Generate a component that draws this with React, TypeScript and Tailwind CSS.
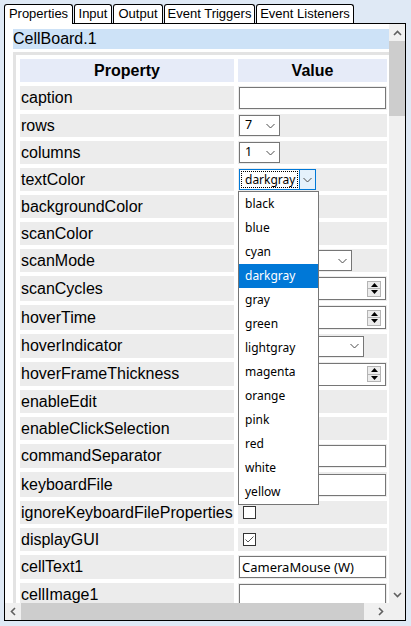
import React from 'react';

const ui = "font-['Noto_Sans','Open_Sans',sans-serif]";

function Chevron() {
  return (
    <svg width="9" height="6" viewBox="0 0 9 6">
      <polyline points="0.5,1 4.5,5 8.5,1" fill="none" stroke="#4d4d4d" strokeWidth="1" />
    </svg>
  );
}

function Select({ text, w }: { text: string; w: string }) {
  return (
    <div className={`${w} h-[21px] border border-[#767676] bg-white flex items-center justify-between pl-[5px] pr-[4px] text-[12.5px] leading-none ${ui}`}>
      <span>{text}</span>
      <Chevron />
    </div>
  );
}

function FocusSelect({ text }: { text: string }) {
  return (
    <div className={`w-[77px] h-[21px] border border-[#0078d7] bg-white flex text-[12px] leading-none ${ui}`}>
      <div className="flex-1 m-px border border-dotted border-black flex items-center pl-[3px]">{text}</div>
      <div className="w-[16px] border-l border-[#0078d7] bg-[#e5f1fb] flex items-center justify-center">
        <Chevron />
      </div>
    </div>
  );
}

function TextInput({ text = '' }: { text?: string }) {
  return (
    <div className={`w-[147px] h-[22px] border border-[#767676] bg-white flex items-center pl-[2px] text-[13px] leading-none ${ui}`}>
      {text}
    </div>
  );
}

function Spinner() {
  return (
    <div className="w-[147px] h-[23px] border border-[#767676] bg-white flex items-center justify-end pr-[4px]">
      <div className="w-[14px] h-[16px] border border-[#b4b4b4] bg-[#ececec] flex flex-col">
        <div className="flex-1 flex items-center justify-center border-b border-[#b4b4b4]">
          <svg width="7" height="4" viewBox="0 0 7 4"><polygon points="3.5,0 7,4 0,4" fill="#000" /></svg>
        </div>
        <div className="flex-1 flex items-center justify-center">
          <svg width="7" height="4" viewBox="0 0 7 4"><polygon points="0,0 7,0 3.5,4" fill="#000" /></svg>
        </div>
      </div>
    </div>
  );
}

function Checkbox({ checked = false }: { checked?: boolean }) {
  return (
    <div className="ml-[4px] w-[13px] h-[13px] border border-[#333] bg-white flex items-center justify-center">
      {checked && (
        <svg width="11" height="11" viewBox="0 0 11 11">
          <polyline points="1.5,5.5 4,8 9.5,2.5" fill="none" stroke="#555" strokeWidth="1" />
        </svg>
      )}
    </div>
  );
}

// values under the open list are left without text, nothing of them shows
const props: { name: string; h: string; value?: React.ReactNode }[] = [
  { name: 'caption', h: 'h-[24px]', value: <TextInput /> },
  { name: 'rows', h: 'h-[23px]', value: <Select text="7" w="w-[41px]" /> },
  { name: 'columns', h: 'h-[23px]', value: <Select text="1" w="w-[41px]" /> },
  { name: 'textColor', h: 'h-[23px]', value: <FocusSelect text="darkgray" /> },
  { name: 'backgroundColor', h: 'h-[23px]', value: <Select text="" w="w-[77px]" /> },
  { name: 'scanColor', h: 'h-[23px]', value: <Select text="" w="w-[77px]" /> },
  { name: 'scanMode', h: 'h-[23px]', value: <Select text="" w="w-[113px]" /> },
  { name: 'scanCycles', h: 'h-[25px]', value: <Spinner /> },
  { name: 'hoverTime', h: 'h-[25px]', value: <Spinner /> },
  { name: 'hoverIndicator', h: 'h-[24px]', value: <Select text="" w="w-[125px]" /> },
  { name: 'hoverFrameThickness', h: 'h-[24px]', value: <Spinner /> },
  { name: 'enableEdit', h: 'h-[23px]', value: <Checkbox /> },
  { name: 'enableClickSelection', h: 'h-[23px]', value: <Checkbox /> },
  { name: 'commandSeparator', h: 'h-[24px]', value: <TextInput /> },
  { name: 'keyboardFile', h: 'h-[25px]', value: <TextInput /> },
  { name: 'ignoreKeyboardFileProperties', h: 'h-[23px]', value: <Checkbox /> },
  { name: 'displayGUI', h: 'h-[23px]', value: <Checkbox checked /> },
  { name: 'cellText1', h: 'h-[24px]', value: <TextInput text="CameraMouse (W)" /> },
  { name: 'cellImage1', h: 'h-[24px]', value: <TextInput /> },
];

const colors = ['black', 'blue', 'cyan', 'darkgray', 'gray', 'green', 'lightgray', 'magenta', 'orange', 'pink', 'red', 'white', 'yellow'];

const tabs = [
  { label: 'Properties', w: 'w-[69px]' },
  { label: 'Input', w: 'w-[38px]' },
  { label: 'Output', w: 'w-[50px]' },
  { label: 'Event Triggers', w: 'w-[91px]' },
  { label: 'Event Listeners', w: 'w-[98px]' },
];

export default function App() {
  return (
    <div className="relative w-[411px] h-[626px] overflow-hidden bg-[#dfe9f5] p-1 text-black font-['Liberation_Sans',Arial,sans-serif]">
      {/* tab strip */}
      <div className="flex items-end gap-px h-[19px]">
        {tabs.map((t, i) => (
          <div
            key={t.label}
            className={
              i === 0
                ? `${t.w} relative z-10 -mb-px h-[20px] pb-px bg-white border border-b-0 border-black rounded-t-[3px] text-[13px] leading-[17px] text-center whitespace-nowrap`
                : `${t.w} h-[19px] bg-white border border-b-0 border-black rounded-t-[3px] text-[13px] leading-[17px] text-center whitespace-nowrap`
            }
          >
            {t.label}
          </div>
        ))}
      </div>

      {/* panel */}
      <div className="w-[402px] h-[598px] border border-black bg-white grid grid-cols-[384px_16px] grid-rows-[579px_17px]">
        <div className="overflow-hidden pl-2 pt-[5px]">
          <div className="w-[376px] h-[20px] bg-[#cde2f7] text-[16px] leading-[20px]">CellBoard.1</div>
          <table className="mt-[3px] w-[381px] table-fixed border-separate border-spacing-1 border-[3px] border-[#e3e3e3] text-[16px] leading-[18px]">
            <colgroup>
              <col className="w-[214px]" />
              <col className="w-[149px]" />
            </colgroup>
            <thead>
              <tr>
                <th className="h-[23px] p-0 bg-[#e6ebf8] font-bold text-center">Property</th>
                <th className="h-[23px] p-0 bg-[#e6ebf8] font-bold text-center">Value</th>
              </tr>
            </thead>
            <tbody>
              {props.map((p) => (
                <tr key={p.name}>
                  <td className={`${p.h} p-0 pl-px bg-[#ececec] whitespace-nowrap`}>{p.name}</td>
                  <td className={`${p.h} p-0 pl-px bg-[#ececec]`}>{p.value}</td>
                </tr>
              ))}
            </tbody>
          </table>
        </div>

        {/* vertical scrollbar */}
        <div className="bg-[#f0f0f0] flex flex-col">
          <div className="h-[17px] flex items-center justify-center">
            <svg width="9" height="6" viewBox="0 0 9 6"><polyline points="1,5 4.5,1.5 8,5" fill="none" stroke="#606060" strokeWidth="1.6" /></svg>
          </div>
          <div className="h-[75px] bg-[#cdcdcd]" />
          <div className="flex-1" />
          <div className="h-[17px] flex items-center justify-center">
            <svg width="9" height="6" viewBox="0 0 9 6"><polyline points="1,1 4.5,4.5 8,1" fill="none" stroke="#606060" strokeWidth="1.6" /></svg>
          </div>
        </div>

        {/* horizontal scrollbar */}
        <div className="bg-[#f0f0f0] flex">
          <div className="w-[16px] flex items-center justify-center">
            <svg width="6" height="9" viewBox="0 0 6 9"><polyline points="5,1 1.5,4.5 5,8" fill="none" stroke="#606060" strokeWidth="1.6" /></svg>
          </div>
          <div className="w-[343px] bg-[#cdcdcd]" />
          <div className="flex-1" />
          <div className="w-[16px] flex items-center justify-center">
            <svg width="6" height="9" viewBox="0 0 6 9"><polyline points="1,1 4.5,4.5 1,8" fill="none" stroke="#606060" strokeWidth="1.6" /></svg>
          </div>
        </div>
        <div className="bg-[#f0f0f0]" />
      </div>

      {/* open colour list */}
      <div className={`absolute left-[238px] top-[191px] w-[81px] h-[314px] border border-[#767676] bg-white text-[12px] ${ui}`}>
        {colors.map((c) => (
          <div
            key={c}
            className={
              c === 'darkgray'
                ? 'h-[24px] flex items-center pl-[6px] bg-[#0078d7] text-white'
                : 'h-[24px] flex items-center pl-[6px]'
            }
          >
            {c}
          </div>
        ))}
      </div>
    </div>
  );
}
